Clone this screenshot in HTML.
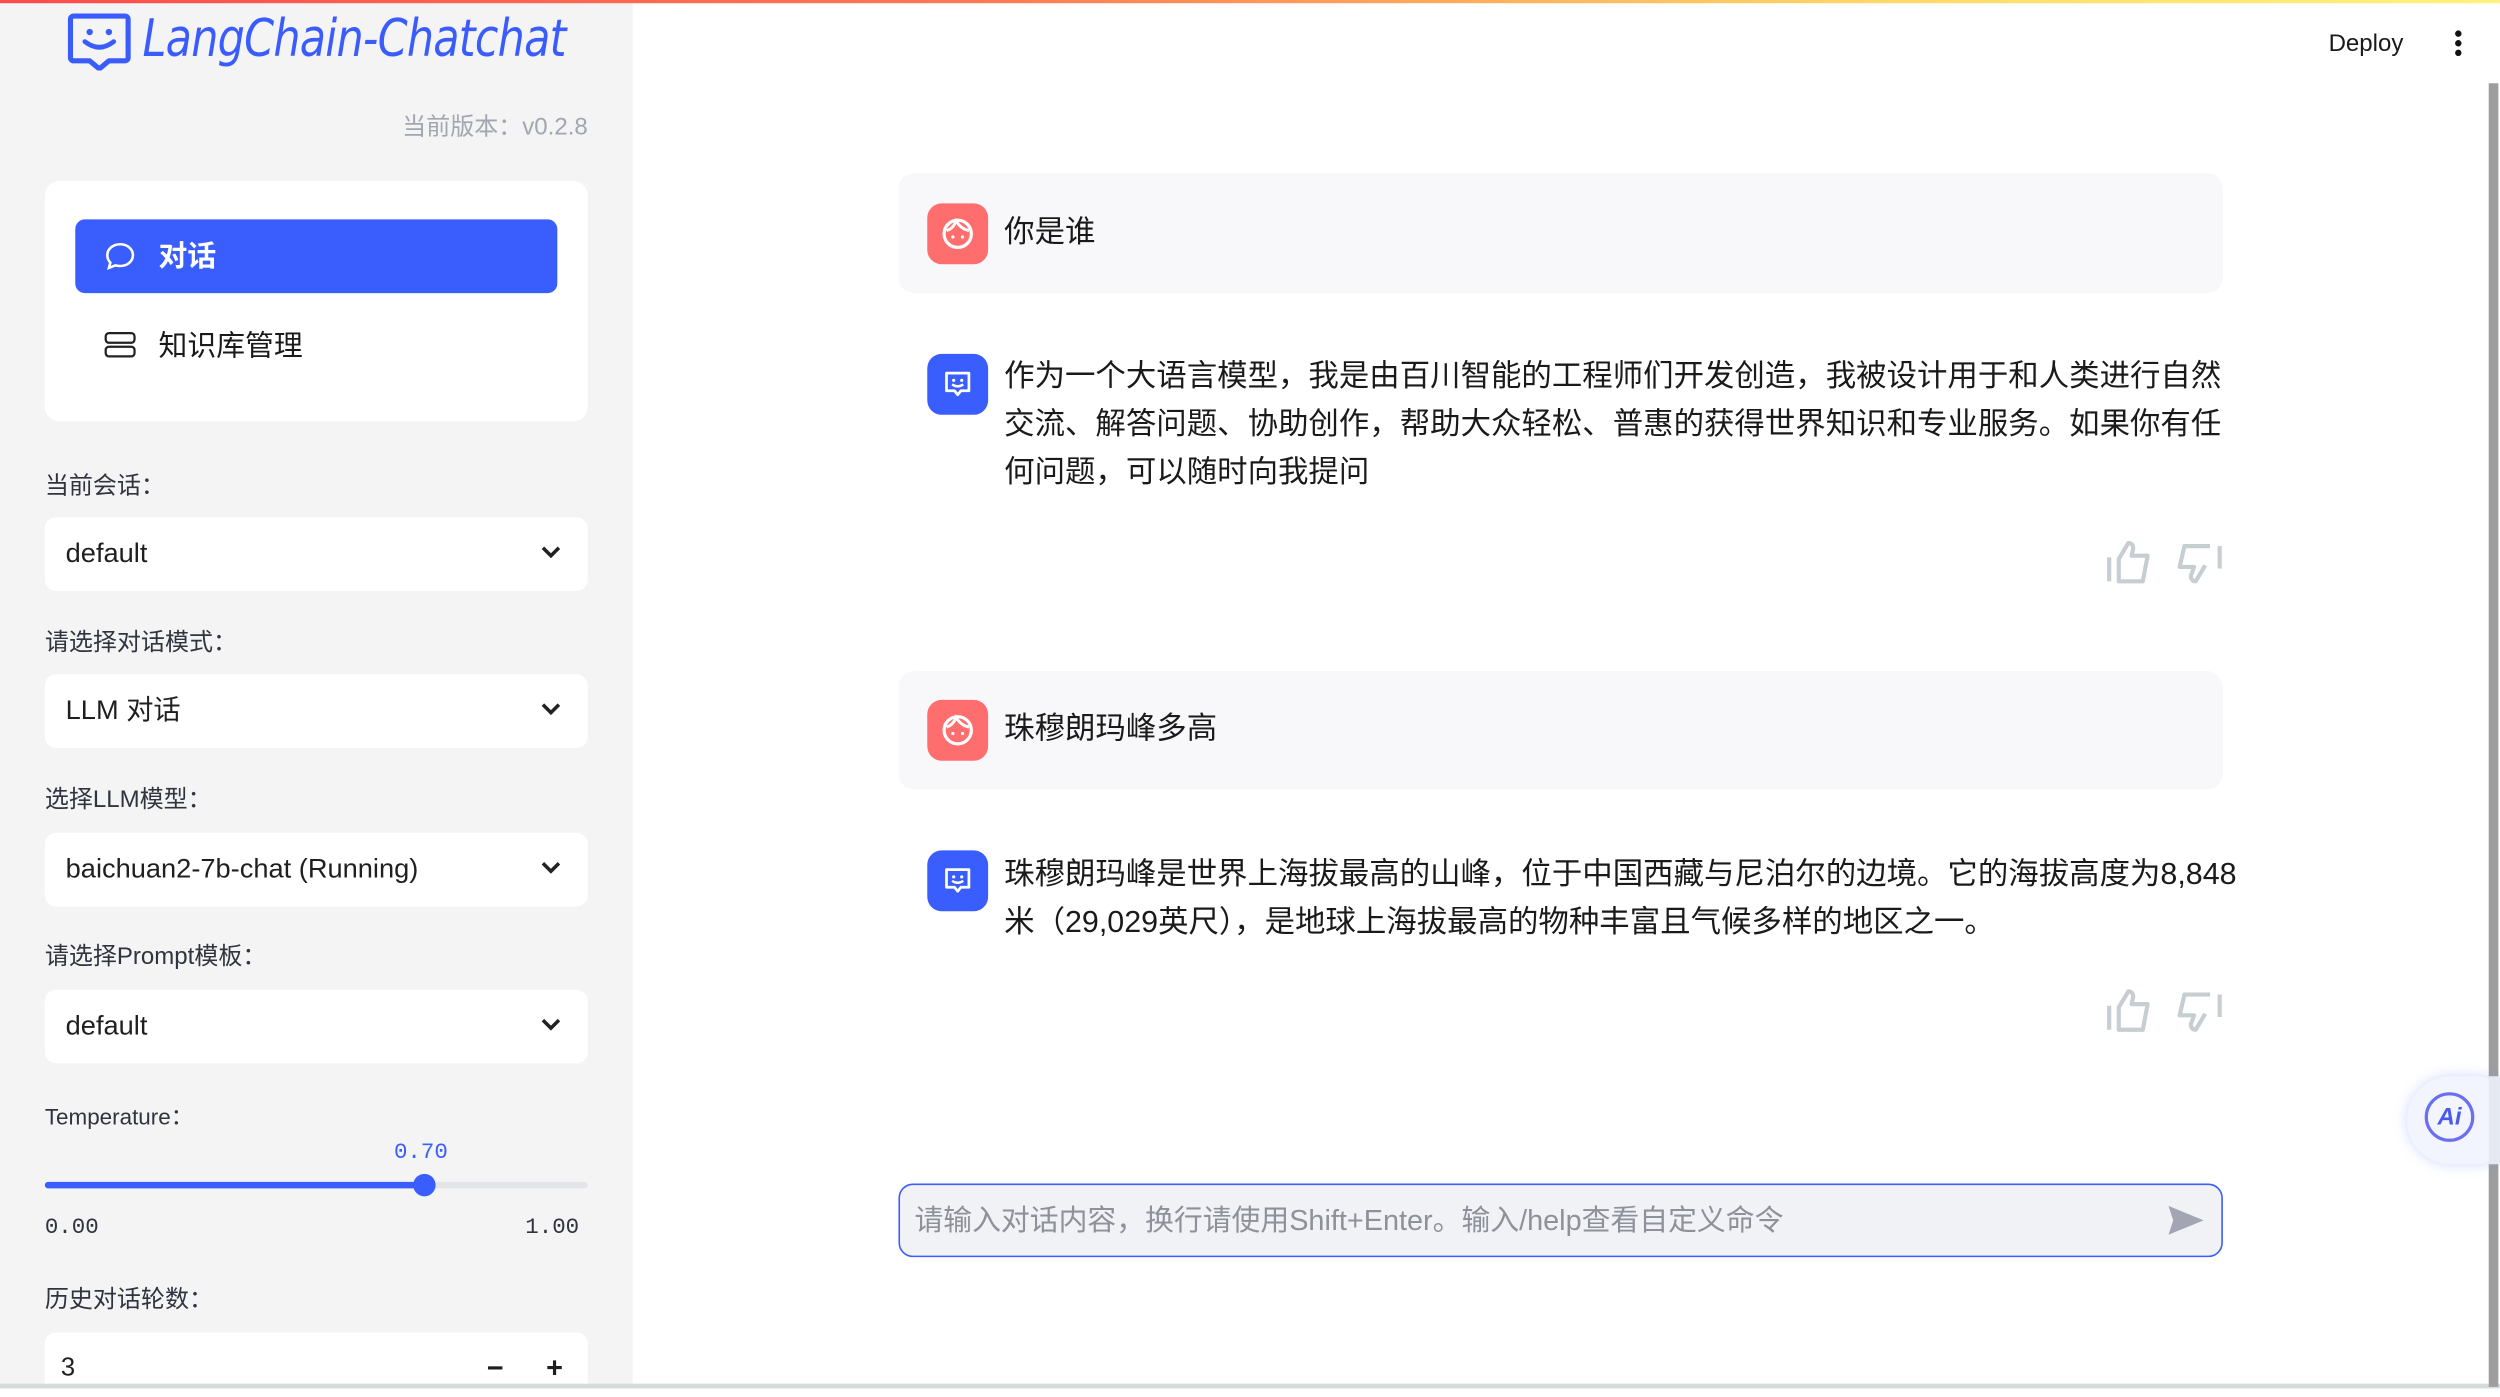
<!DOCTYPE html>
<html><head><meta charset="utf-8">
<style>
html,body{margin:0;padding:0;width:2500px;height:1386px;overflow:hidden;background:#fff}
#w{position:absolute;left:0;top:0;width:1561px;height:866px;transform:scale(1.6015);transform-origin:0 0;font-family:"Liberation Sans","Noto Sans CJK SC",sans-serif;color:#1f1f1f}
.a{position:absolute}
.topbar{left:0;top:0;width:1561px;height:2px;background:linear-gradient(90deg,#ff4b4b,#ff7a55 40%,#ffd866 75%,#fff27a)}
.side{left:0;top:0;width:395px;height:866px;background:#f4f4f5}
.lbl{left:28px;font-size:15px;color:#31333f;line-height:20px}
.sel{left:28px;width:339px;height:46px;background:#fff;border-radius:7px;font-size:17px;line-height:46px;color:#1f1f1f}
.sel span{position:absolute;left:13px}
.sel svg{position:absolute;right:16px;top:17px}
.msg{font-size:19px;line-height:30px;color:#1a1a1a}
.av{width:38px;height:38px;border-radius:9px}
</style></head><body><div id="w">
<div class="a side"></div>
<div class="a topbar"></div>

<svg class="a" style="left:42px;top:8px" width="40" height="36" viewBox="0 0 40 36"><path d="M4 2h32a2 2 0 0 1 2 2v24a2 2 0 0 1-2 2H26l-6 5-6-5H4a2 2 0 0 1-2-2V4a2 2 0 0 1 2-2z" fill="none" stroke="#3a5cfc" stroke-width="3.2" stroke-linejoin="round"/><circle cx="14" cy="12" r="2" fill="#3a5cfc"/><circle cx="26" cy="12" r="2" fill="#3a5cfc"/><path d="M11 18q9 7 18 0" fill="none" stroke="#3a5cfc" stroke-width="3" stroke-linecap="round"/></svg>
<div class="a" style="left:89px;top:4px;font-size:32px;font-style:italic;color:#3a5cfc;letter-spacing:-0.5px;font-family:'DejaVu Sans Condensed','Liberation Sans',sans-serif;line-height:40px;transform:scaleX(0.93);transform-origin:0 0;white-space:nowrap">LangChain-Chatchat</div>
<div class="a" style="right:1194px;top:70px;font-size:15px;color:#a3a6b0;line-height:20px">当前版本：v0.2.8</div>

<div class="a" style="left:28px;top:113px;width:339px;height:150px;background:#fff;border-radius:9px"></div>
<div class="a" style="left:47px;top:137px;width:301px;height:46px;background:#3a5efd;border-radius:6px"></div>
<svg class="a" style="left:65px;top:151px" width="20" height="18" viewBox="0 0 20 18"><path d="M10 1.5c4.4 0 8 2.9 8 6.8s-3.6 6.8-8 6.8c-1 0-2-.2-2.9-.4L3 16.3l.9-3.3C2.7 11.8 2 10.1 2 8.3 2 4.4 5.6 1.5 10 1.5z" fill="none" stroke="#fff" stroke-width="1.6"/></svg>
<div class="a" style="left:99px;top:148px;font-size:18px;font-weight:bold;color:#fff;line-height:24px">对话</div>
<svg class="a" style="left:65px;top:207px" width="20" height="17" viewBox="0 0 20 17"><rect x="1" y="1" width="18" height="6" rx="2" fill="none" stroke="#222" stroke-width="1.4"/><rect x="1" y="9.5" width="18" height="6" rx="2" fill="none" stroke="#222" stroke-width="1.4"/></svg>
<div class="a" style="left:99px;top:204px;font-size:18px;color:#1a1a1a;line-height:24px">知识库管理</div>

<div class="a lbl" style="top:294px">当前会话：</div>
<div class="a sel" style="top:323px"><span>default</span><svg width="14" height="10" viewBox="0 0 14 10"><path d="M2 2l5 5 5-5" fill="none" stroke="#222" stroke-width="2.2"/></svg></div>
<div class="a lbl" style="top:392px">请选择对话模式：</div>
<div class="a sel" style="top:421px"><span>LLM 对话</span><svg width="14" height="10" viewBox="0 0 14 10"><path d="M2 2l5 5 5-5" fill="none" stroke="#222" stroke-width="2.2"/></svg></div>
<div class="a lbl" style="top:490px">选择LLM模型：</div>
<div class="a sel" style="top:520px"><span>baichuan2-7b-chat (Running)</span><svg width="14" height="10" viewBox="0 0 14 10"><path d="M2 2l5 5 5-5" fill="none" stroke="#222" stroke-width="2.2"/></svg></div>
<div class="a lbl" style="top:588px">请选择Prompt模板：</div>
<div class="a sel" style="top:618px"><span>default</span><svg width="14" height="10" viewBox="0 0 14 10"><path d="M2 2l5 5 5-5" fill="none" stroke="#222" stroke-width="2.2"/></svg></div>
<div class="a lbl" style="top:687px;font-size:14px">Temperature：</div>
<div class="a" style="left:246px;top:711px;font-family:'Liberation Mono',monospace;font-size:14px;color:#3a5efd;line-height:18px">0.70</div>
<div class="a" style="left:28px;top:738px;width:339px;height:4px;background:#e4e5e8;border-radius:2px"></div>
<div class="a" style="left:28px;top:738px;width:237px;height:4px;background:#3a5efd;border-radius:2px"></div>
<div class="a" style="left:258px;top:733px;width:14px;height:14px;background:#3a5efd;border-radius:50%"></div>
<div class="a" style="left:28px;top:758px;font-family:'Liberation Mono',monospace;font-size:14px;color:#31333f;line-height:18px">0.00</div>
<div class="a" style="left:328px;top:758px;font-family:'Liberation Mono',monospace;font-size:14px;color:#31333f;line-height:18px">1.00</div>
<div class="a lbl" style="top:802px">历史对话轮数：</div>
<div class="a" style="left:28px;top:832px;width:339px;height:40px;background:#fff;border-radius:7px"></div>
<div class="a" style="left:38px;top:845px;font-size:16px;line-height:20px">3</div>
<div class="a" style="left:304px;top:843px;font-size:18px;font-weight:bold;line-height:22px">−</div>
<div class="a" style="left:341px;top:843px;font-size:18px;font-weight:bold;line-height:22px">+</div>
<div class="a" style="left:0;top:864px;width:1561px;height:3px;background:#d5dcdc"></div>

<div class="a" style="left:1454px;top:18px;font-size:15px;color:#1a1a1a;line-height:20px">Deploy</div>
<div class="a" style="left:1533px;top:19px;width:4px;height:4px;background:#111;border-radius:50%"></div>
<div class="a" style="left:1533px;top:25px;width:4px;height:4px;background:#111;border-radius:50%"></div>
<div class="a" style="left:1533px;top:31px;width:4px;height:4px;background:#111;border-radius:50%"></div>
<div class="a" style="left:1554px;top:52px;width:6px;height:814px;background:#9e9e9e"></div>

<div class="a" style="left:561px;top:108px;width:827px;height:75px;background:#f8f8fa;border-radius:10px"></div>
<div class="a av" style="left:579px;top:127px;background:#ff6e6e"></div>
<svg class="a" style="left:579px;top:127px" width="38" height="38" viewBox="0 0 38 38"><circle cx="19" cy="19" r="8.5" fill="none" stroke="#fff" stroke-width="2"/><path d="M12 17q4-1 6-6q3 5 8 6" fill="none" stroke="#fff" stroke-width="1.8"/><circle cx="16" cy="21" r="1" fill="#fff"/><circle cx="22" cy="21" r="1" fill="#fff"/></svg>
<div class="a msg" style="left:627px;top:131px">你是谁</div>

<div class="a av" style="left:579px;top:221px;background:#3a5efd"></div>
<svg class="a" style="left:588px;top:230px" width="20" height="20" viewBox="0 0 20 20"><path d="M3 3h14v11h-5l-2 2.5-2-2.5H3z" fill="none" stroke="#fff" stroke-width="1.7" stroke-linejoin="round"/><circle cx="7.5" cy="7.5" r="1" fill="#fff"/><circle cx="12.5" cy="7.5" r="1" fill="#fff"/><path d="M6.5 10q3.5 2.5 7 0" fill="none" stroke="#fff" stroke-width="1.5"/></svg>
<div class="a msg" style="left:627px;top:221px;width:760px">作为一个大语言模型，我是由百川智能的工程师们开发创造，我被设计用于和人类进行自然交流、解答问题、协助创作，帮助大众轻松、普惠的获得世界知识和专业服务。如果你有任何问题，可以随时向我提问</div>

<svg class="a" style="left:1314px;top:336px" width="32" height="30" viewBox="0 0 32 30"><path d="M3 12v15M9 27V13l6-10c2 0 3 1.5 3 3.5L17 11h10l-3 16z" fill="none" stroke="#c6ced2" stroke-width="2.6" stroke-linejoin="round"/></svg>
<svg class="a" style="left:1357px;top:338px" width="32" height="30" viewBox="0 0 32 30"><path d="M29 3v14M23 3H7L4 16h9l-2 5.5c0 2 1 3.5 3 3.5l6-10" fill="none" stroke="#c6ced2" stroke-width="2.6" stroke-linejoin="round"/></svg>

<div class="a" style="left:561px;top:419px;width:827px;height:74px;background:#f8f8fa;border-radius:10px"></div>
<div class="a av" style="left:579px;top:437px;background:#ff6e6e"></div>
<svg class="a" style="left:579px;top:437px" width="38" height="38" viewBox="0 0 38 38"><circle cx="19" cy="19" r="8.5" fill="none" stroke="#fff" stroke-width="2"/><path d="M12 17q4-1 6-6q3 5 8 6" fill="none" stroke="#fff" stroke-width="1.8"/><circle cx="16" cy="21" r="1" fill="#fff"/><circle cx="22" cy="21" r="1" fill="#fff"/></svg>
<div class="a msg" style="left:627px;top:441px">珠穆朗玛峰多高</div>

<div class="a av" style="left:579px;top:531px;background:#3a5efd"></div>
<svg class="a" style="left:588px;top:540px" width="20" height="20" viewBox="0 0 20 20"><path d="M3 3h14v11h-5l-2 2.5-2-2.5H3z" fill="none" stroke="#fff" stroke-width="1.7" stroke-linejoin="round"/><circle cx="7.5" cy="7.5" r="1" fill="#fff"/><circle cx="12.5" cy="7.5" r="1" fill="#fff"/><path d="M6.5 10q3.5 2.5 7 0" fill="none" stroke="#fff" stroke-width="1.5"/></svg>
<div class="a msg" style="left:627px;top:532px;width:770px">珠穆朗玛峰是世界上海拔最高的山峰，位于中国西藏与尼泊尔的边境。它的海拔高度为8,848米（29,029英尺），是地球上海拔最高的物种丰富且气候多样的地区之一。</div>

<svg class="a" style="left:1314px;top:616px" width="32" height="30" viewBox="0 0 32 30"><path d="M3 12v15M9 27V13l6-10c2 0 3 1.5 3 3.5L17 11h10l-3 16z" fill="none" stroke="#c6ced2" stroke-width="2.6" stroke-linejoin="round"/></svg>
<svg class="a" style="left:1357px;top:618px" width="32" height="30" viewBox="0 0 32 30"><path d="M29 3v14M23 3H7L4 16h9l-2 5.5c0 2 1 3.5 3 3.5l6-10" fill="none" stroke="#c6ced2" stroke-width="2.6" stroke-linejoin="round"/></svg>

<div class="a" style="left:561px;top:739px;width:825px;height:44px;background:#f0f2f6;border:1px solid #3a5efd;border-radius:9px"></div>
<div class="a" style="left:571px;top:750px;font-size:18px;color:#8e909a;line-height:24px">请输入对话内容，换行请使用Shift+Enter。输入/help查看自定义命令</div>
<svg class="a" style="left:1353px;top:752px" width="24" height="20" viewBox="0 0 24 20"><path d="M1 1l22 9-22 9 3-9z" fill="#a3a6b2"/></svg>

<div class="a" style="left:1503px;top:672px;width:70px;height:55px;background:#f2f5fe;border-radius:28px;box-shadow:0 0 8px rgba(120,140,255,.35)"></div>
<div class="a" style="left:1514px;top:682px;width:31px;height:31px;border-radius:50%;border:2px solid #6a6ef0;box-sizing:border-box;text-align:center;font:italic bold 15px/27px 'Liberation Sans',sans-serif;color:#4a5ae8">Ai</div>
<div class="a" style="left:1554px;top:672px;width:7px;height:55px;background:#e6e9f2"></div>
</div></body></html>
